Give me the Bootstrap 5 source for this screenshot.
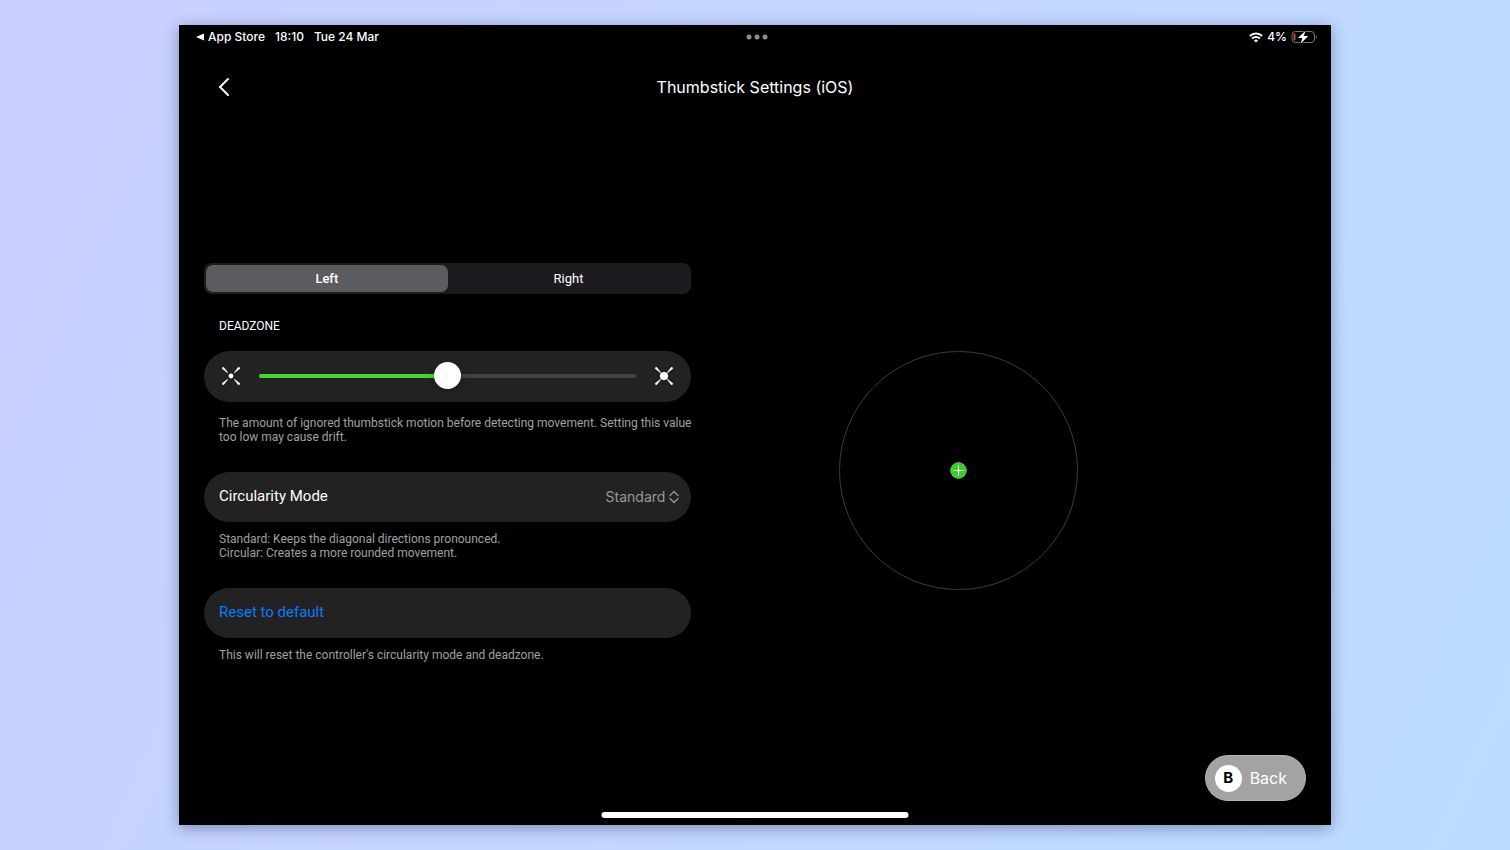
<!DOCTYPE html>
<html lang="en">
<head>
<meta charset="utf-8">
<meta name="viewport" content="width=device-width, initial-scale=1">
<title>Thumbstick Settings (iOS)</title>
<link href="https://cdn.jsdelivr.net/npm/bootstrap@5.3.0/dist/css/bootstrap.min.css" rel="stylesheet">
<style>
  body {
    min-height: 100vh;
    padding: 25px;
    background: linear-gradient(115deg, #c9cfff 0%, #c5d4ff 30%, #c1d9ff 70%, #bcdcff 100%);
    font-family: Inter, sans-serif;
  }
  .tablet {
    max-width: 1152px;
    min-height: calc(100vh - 50px);
    background: #000;
    color: #fff;
    box-shadow: 0 3px 14px rgba(40, 50, 100, .45);
  }
  .status { height: 24px; padding: 0 14px 0 17px; font-size: 12px; font-weight: 500; line-height: 16px; }
  .status a { color: #fff; }
  .status-left { gap: 10px; }
  .dots { color: #8e8e8e; }
  .titlebar { height: 67px; padding: 0 33px; }
  .titlebar h1 { font-size: 16px; line-height: 20px; font-weight: 400; }
  .side { width: 24px; height: 24px; }
  .content { padding: 0 129px 0 25px; gap: 24px; }
  .settings { font-family: Roboto, sans-serif; padding-bottom: 17px; }
  .segments { background: #1c1b20; border-radius: 8px; padding: 2px; font-size: 13px; }
  .segments label { line-height: 27px; border-radius: 7px; }
  .segments .btn-check:checked + label { background: #5c5b60; font-weight: 500; }
  .section-label { margin: 25px 15px 18px; font-size: 12px; line-height: 14px; }
  .panel { height: 50px; border-radius: 26px; background: #222; }
  .panel-slider { height: 51px; padding: 0 18px; gap: 19px; }
  .panel-text { padding: 0 12px 0 15px; font-size: 15px; }
  .help { margin: 10px 0 28px; padding-left: 15px; font-size: 12px; line-height: 14px; color: #a0a0a0; white-space: nowrap; }
  .help-tall { margin-top: 14px; }
  .link-reset { color: #0a7cff; }
  .mode { appearance: none; background: transparent; border: 0; color: #98989d; font: 400 14px/20px Inter, sans-serif; text-align-last: right; padding: 0 14px 0 0; outline-offset: 4px; }
  .mode option { color: #000; }
  .mode-arrows { right: 0; top: 3px; pointer-events: none; }
  .deadzone { appearance: none; height: 27px; background: transparent; margin: 0; }
  .deadzone::-webkit-slider-runnable-track {
    height: 4px; border-radius: 2px;
    background: linear-gradient(to right, #43d72f var(--fill), #414144 var(--fill));
  }
  .deadzone::-webkit-slider-thumb {
    appearance: none; width: 27px; height: 27px; margin-top: -12px;
    border-radius: 50%; background: #fff; box-shadow: 0 2px 6px rgba(0, 0, 0, .25);
  }
  .ring { width: 239px; height: 239px; border: 1px solid #3c3c3c; border-radius: 50%; }
  .back { right: 25px; bottom: 24px; height: 46px; padding: 0 18px 0 9px; gap: 8px; border: 1px solid #b4b4b4; border-radius: 23px; background: #a3a3a3; color: #fff; font-size: 16px; }
  .key { width: 27px; height: 27px; border-radius: 50%; background: #fff; color: #000; font-size: 15px; font-weight: 700; }
  .home { bottom: 7px; width: 307px; height: 6px; border-radius: 3px; background: #fff; }
</style>
</head>
<body>
<div class="tablet mx-auto position-relative d-flex flex-column">
  <div class="status row g-0 align-items-center">
    <div class="status-left col d-flex align-items-center">
      <a href="#" class="text-decoration-none d-flex align-items-center"><svg class="me-1" width="8" height="8" viewBox="0 0 8 8" fill="#fff" aria-hidden="true"><path d="M8 .5v7L0 4z"/></svg>App Store</a>
      <span>18:10</span>
      <span>Tue 24 Mar</span>
    </div>
    <div class="col-auto d-flex">
      <svg class="dots" width="22" height="6" viewBox="0 0 22 6" fill="currentColor" aria-hidden="true"><circle cx="3" cy="3" r="2.5"/><circle cx="11" cy="3" r="2.5"/><circle cx="19" cy="3" r="2.5"/></svg>
    </div>
    <div class="col d-flex align-items-center justify-content-end gap-1">
      <svg width="14" height="11" viewBox="0 0 14 11" fill="none" stroke="#fff" stroke-width="2" aria-hidden="true"><path d="M.8 4a8.800 8.800 0 0 1 12.400 0M3.100 6.500a5.500 5.500 0 0 1 7.800 0"/><path d="M7 10.600 4.900 8.500a3 3 0 0 1 4.200 0z" fill="#fff" stroke="none"/></svg>
      <span>4%</span>
      <svg width="26" height="14" viewBox="0 0 26 14" aria-hidden="true"><rect x="1" y="1.500" width="22.500" height="11" rx="3.500" fill="none" stroke="#777"/><path d="M24.800 5v4c1.300-.6 1.300-3.400 0-4z" fill="#777"/><rect x="2.500" y="3.500" width="2" height="7" rx=".8" fill="#c2483f"/><path d="M14.600.6 7 8h4.400L9.500 13.700 17.300 6h-4.500z" fill="#fff" stroke="#000" stroke-width="1.600" paint-order="stroke"/></svg>
    </div>
  </div>

  <header class="titlebar d-flex align-items-center justify-content-between pt-2">
    <button type="button" class="side btn p-0 border-0 d-flex align-items-center justify-content-center" aria-label="Go back"><svg width="12" height="20" viewBox="0 0 12 20" fill="none" stroke="#fff" stroke-width="2" stroke-linecap="round" aria-hidden="true"><path d="M10 2 2 10l8 8"/></svg></button>
    <h1 class="m-0">Thumbstick Settings (iOS)</h1>
    <span class="side"></span>
  </header>

  <main class="content flex-grow-1 d-flex align-items-center">
    <form class="settings col">
      <div class="segments d-flex text-center">
        <input type="radio" class="btn-check" name="stick" id="stick-left" checked>
        <label class="w-50" for="stick-left">Left</label>
        <input type="radio" class="btn-check" name="stick" id="stick-right">
        <label class="w-50" for="stick-right">Right</label>
      </div>

      <label class="section-label d-block" for="deadzone">DEADZONE</label>
      <div class="panel panel-slider d-flex align-items-center">
        <svg class="flex-shrink-0" width="18" height="18" viewBox="0 0 18 18" fill="#fff" aria-hidden="true"><circle cx="9" cy="9" r="2.4"/><g id="rays"><path id="ray" d="M.4 2.1a1.200 1.200 0 0 1 1.700-1.700L6 5.500l-.5.5z"/><use href="#ray" transform="rotate(90 9 9)"/><use href="#ray" transform="rotate(180 9 9)"/><use href="#ray" transform="rotate(270 9 9)"/></g></svg>
        <input type="range" class="deadzone flex-grow-1" id="deadzone" min="0" max="100" value="50" style="--fill: 50%">
        <svg class="flex-shrink-0" width="18" height="18" viewBox="0 0 18 18" fill="#fff" aria-hidden="true"><circle cx="9" cy="9" r="4.1"/><use href="#rays"/></svg>
      </div>
      <p class="help help-tall">The amount of ignored thumbstick motion before detecting movement. Setting this value<br>too low may cause drift.</p>

      <div class="panel panel-text d-flex align-items-center justify-content-between">
        <label for="mode">Circularity Mode</label>
        <div class="position-relative d-flex">
          <select class="mode" id="mode"><option>Standard</option><option>Circular</option></select>
          <svg class="mode-arrows position-absolute" width="10" height="14" viewBox="0 0 10 14" fill="none" stroke="#98989d" stroke-width="1.3" stroke-linecap="round" stroke-linejoin="round" aria-hidden="true"><path d="M1 5.500 5 1.500l4 4M1 8.500l4 4 4-4"/></svg>
        </div>
      </div>
      <p class="help">Standard: Keeps the diagonal directions pronounced.<br>Circular: Creates a more rounded movement.</p>

      <button type="button" class="panel panel-text link-reset w-100 border-0 text-start d-block">Reset to default</button>
      <p class="help mb-0">This will reset the controller's circularity mode and deadzone.</p>
    </form>

    <div class="col d-flex justify-content-center">
      <div class="ring d-flex align-items-center justify-content-center">
        <svg width="17" height="17" viewBox="0 0 17 17" aria-hidden="true"><circle cx="8.500" cy="8.500" r="7.800" fill="#34d321" stroke="#8fae8b"/><path d="M8.500 3.500v10M3.500 8.500h10" stroke="#fff"/></svg>
      </div>
    </div>
  </main>

  <button type="button" class="back position-absolute d-flex align-items-center"><span class="key d-flex align-items-center justify-content-center">B</span>Back</button>
  <div class="home position-absolute start-50 translate-middle-x"></div>
</div>
<script src="https://cdn.jsdelivr.net/npm/bootstrap@5.3.0/dist/js/bootstrap.bundle.min.js"></script>
<script>
  const slider = document.getElementById('deadzone');
  slider.addEventListener('input', () => slider.style.setProperty('--fill', slider.value + '%'));
</script>
</body>
</html>
